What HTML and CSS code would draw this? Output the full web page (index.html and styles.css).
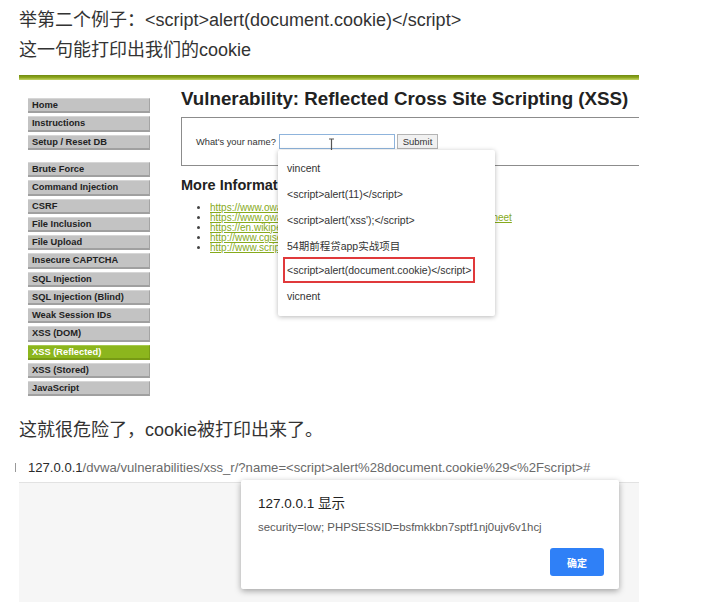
FILE: index.html
```html
<!DOCTYPE html>
<html lang="zh-CN">
<head>
    <meta charset="UTF-8">
    <title>XSS cookie 示例</title>
    <link rel="stylesheet" href="styles.css">
</head>
<body>
    <div class="page">
        <p class="text">举第二个例子：&lt;script&gt;alert(document.cookie)&lt;/script&gt;</p>
        <p class="text">这一句能打印出我们的cookie</p>

        <!-- DVWA screenshot -->
        <div class="shot dvwa">
            <div class="dvwa-bar"></div>
            <div class="dvwa-body">
                <div class="menu">
                    <div class="menu-group">
                        <div class="menu-item">Home</div>
                        <div class="menu-item">Instructions</div>
                        <div class="menu-item">Setup / Reset DB</div>
                    </div>
                    <div class="menu-group">
                        <div class="menu-item">Brute Force</div>
                        <div class="menu-item">Command Injection</div>
                        <div class="menu-item">CSRF</div>
                        <div class="menu-item">File Inclusion</div>
                        <div class="menu-item">File Upload</div>
                        <div class="menu-item">Insecure CAPTCHA</div>
                        <div class="menu-item">SQL Injection</div>
                        <div class="menu-item">SQL Injection (Blind)</div>
                        <div class="menu-item">Weak Session IDs</div>
                        <div class="menu-item">XSS (DOM)</div>
                        <div class="menu-item selected">XSS (Reflected)</div>
                        <div class="menu-item">XSS (Stored)</div>
                        <div class="menu-item">JavaScript</div>
                    </div>
                </div>
                <div class="main">
                    <h1>Vulnerability: Reflected Cross Site Scripting (XSS)</h1>
                    <div class="vuln-box">
                        <span class="label">What's your name?</span>
                        <span class="name-input"></span>
                        <span class="submit">Submit</span>
                    </div>
                    <h2>More Information</h2>
                    <ul class="links">
                        <li><a>https://www.owasp.org/index.php/Cross-site_Scripting_(XSS)</a></li>
                        <li><a>https://www.owasp.org/index.php/XSS_Filter_Evasion_Cheat_Sheet</a></li>
                        <li><a>https://en.wikipedia.org/wiki/Cross-site_scripting</a></li>
                        <li><a>http://www.cgisecurity.com/xss-faq.html</a></li>
                        <li><a>http://www.scriptalert1.com/</a></li>
                    </ul>
                </div>
            </div>

            <!-- text cursor over the input -->
            <svg class="ibeam" width="7" height="14" viewBox="0 0 7 14">
                <path d="M1 1h5M3.5 1v12M1 13h5" stroke="#555" stroke-width="1.2" fill="none"/>
            </svg>

            <!-- autocomplete list -->
            <div class="autocomplete">
                <div class="ac-item">vincent</div>
                <div class="ac-item">&lt;script&gt;alert(11)&lt;/script&gt;</div>
                <div class="ac-item">&lt;script&gt;alert('xss');&lt;/script&gt;</div>
                <div class="ac-item">54期前程贷app实战项目</div>
                <div class="ac-item marked"><span>&lt;script&gt;alert(document.cookie)&lt;/script&gt;</span></div>
                <div class="ac-item">vicnent</div>
            </div>
        </div>

        <p class="text">这就很危险了，cookie被打印出来了。</p>

        <!-- browser screenshot -->
        <div class="shot browser">
            <div class="url-row">
                <span class="site-icon"></span>
                <span class="host">127.0.0.1</span><span class="path">/dvwa/vulnerabilities/xss_r/?name=&lt;script&gt;alert%28document.cookie%29&lt;%2Fscript&gt;#</span>
            </div>
            <div class="viewport">
                <div class="alert">
                    <div class="alert-title">127.0.0.1 显示</div>
                    <div class="alert-msg">security=low; PHPSESSID=bsfmkkbn7sptf1nj0ujv6v1hcj</div>
                    <div class="alert-actions">
                        <button class="ok-button">确定</button>
                    </div>
                </div>
            </div>
        </div>
    </div>
</body>
</html>
```

FILE: styles.css
```css
body {
    margin: 0;
    background-color: #ffffff;
    font-family: 'Liberation Sans', 'Noto Sans CJK SC', sans-serif;
}

.page {
    width: 620px;
    padding: 5px 0 0 19px;
}

.text {
    margin: 0;
    font-size: 18px;
    line-height: 30px;
    color: #333333;
    white-space: nowrap;
}

.shot {
    position: relative;
    width: 620px;
}

/* ---------- DVWA screenshot ---------- */
.dvwa {
    margin-top: 10px;
    height: 330px;
    overflow: hidden;
    margin-bottom: 10px;
}

.dvwa-bar {
    height: 5px;
    background: linear-gradient(#6f8a0e, #8ea620 50%, #c5d66a);
}

.dvwa-body {
    display: flex;
    padding-left: 9px;
    color: #222222;
}

.menu {
    width: 122px;
    flex-shrink: 0;
    margin-top: 18px;
}

.menu-group {
    margin-bottom: 12.25px;
}

.menu-item {
    box-sizing: border-box;
    height: 15.25px;
    margin-bottom: 3px;
    padding-left: 4px;
    background-color: #c3c3c3;
    border-top: 1px solid #d6d6d6;
    border-right: 1px solid #a4a4a4;
    border-bottom: 2px solid #a0a0a0;
    font-size: 9.3px;
    font-weight: bold;
    line-height: 12px;
    color: #222222;
    white-space: nowrap;
}

.menu-item.selected {
    background-color: #8cb61d;
    border-top-color: #a6c94c;
    border-right-color: #7a9e16;
    border-bottom-color: #779a14;
    color: #ffffff;
}

.main {
    width: 470px;
    flex-shrink: 0;
    margin-left: 31px;
    padding-top: 8px;
}

.main h1 {
    margin: 0;
    font-size: 18.75px;
    line-height: 22px;
    font-weight: bold;
    color: #222222;
    white-space: nowrap;
}

.vuln-box {
    display: flex;
    align-items: center;
    margin-top: 7px;
    height: 47px;
    padding-left: 14px;
    border: 1px solid #8c8c8c;
    font-size: 9.3px;
    color: #333333;
}

.label {
    width: 83px;
}

.name-input {
    box-sizing: border-box;
    width: 116px;
    height: 15px;
    border: 1px solid #8fb4dc;
    background-color: #ffffff;
}

.submit {
    box-sizing: border-box;
    margin-left: 2px;
    width: 41px;
    height: 15px;
    border: 1px solid #b4b4b4;
    background-color: #f1f1f1;
    text-align: center;
    line-height: 13px;
    font-size: 9.5px;
}

.main h2 {
    margin: 11px 0 0;
    font-size: 14.5px;
    line-height: 17px;
    font-weight: bold;
    color: #222222;
    white-space: nowrap;
}

.links {
    margin: 9px 0 0;
    padding-left: 29px;
    font-size: 10px;
    line-height: 10px;
    color: #444444;
}

.links a {
    color: #86aa1c;
    text-decoration: underline;
    white-space: nowrap;
}

.ibeam {
    position: absolute;
    left: 309px;
    top: 63px;
}

.autocomplete {
    position: absolute;
    left: 259px;
    top: 75px;
    box-sizing: border-box;
    width: 217px;
    height: 166px;
    padding: 5px 0;
    background-color: #ffffff;
    border-radius: 2px;
    box-shadow: 0 1px 5px rgba(0, 0, 0, 0.28);
}

.ac-item {
    height: 26px;
    padding-left: 9px;
    font-size: 10.5px;
    line-height: 26px;
    color: #333333;
    white-space: nowrap;
}

.ac-item.marked {
    padding-left: 5px;
}

.ac-item.marked span {
    display: block;
    box-sizing: border-box;
    width: 192px;
    height: 26px;
    margin-top: -2px;
    padding-left: 2px;
    border: 2px solid #e0393b;
    line-height: 22px;
}

/* ---------- browser screenshot ---------- */
.url-row {
    display: flex;
    align-items: center;
    height: 20px;
    margin: 12px 0 0 -4px;
    font-size: 13.1px;
    white-space: nowrap;
}

.site-icon {
    width: 1px;
    height: 9px;
    margin-right: 12px;
    background-color: #999999;
}

.host {
    color: #2a2a2a;
}

.path {
    color: #6a6a6a;
}

.viewport {
    position: relative;
    margin-top: 5px;
    height: 119px;
    border-top: 1px solid #e2e2e2;
    background-color: #f6f6f6;
}

.alert {
    position: absolute;
    left: 222px;
    top: -3px;
    box-sizing: border-box;
    width: 378px;
    height: 109px;
    padding: 14px 15px 13px 17px;
    background-color: #ffffff;
    border-radius: 2px;
    box-shadow: 0 2px 6px rgba(0, 0, 0, 0.35);
    display: flex;
    flex-direction: column;
}

.alert-title {
    font-size: 13.5px;
    line-height: 20px;
    color: #222222;
}

.alert-msg {
    margin-top: 4px;
    font-size: 11.4px;
    line-height: 18px;
    color: #5a5a5a;
}

.alert-actions {
    margin-top: auto;
    display: flex;
    justify-content: flex-end;
}

.ok-button {
    width: 54px;
    height: 28px;
    border: none;
    border-radius: 3px;
    background-color: #2f80f7;
    color: #ffffff;
    font-family: 'Noto Sans CJK SC', sans-serif;
    font-size: 10px;
    font-weight: bold;
}
```
